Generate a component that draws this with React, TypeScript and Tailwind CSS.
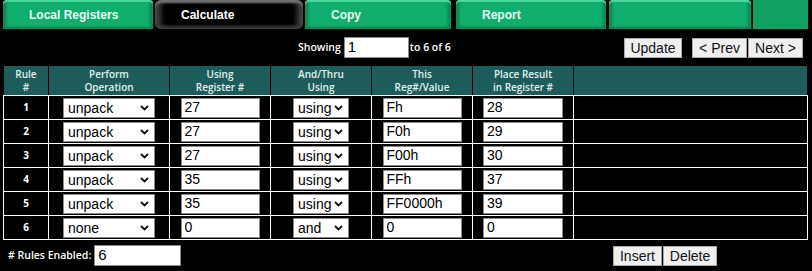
interface Rule {
  n: number;
  op: string;
  reg: string;
  mode: string;
  value: string;
  dest: string;
}

const rules: Rule[] = [
  { n: 1, op: 'unpack', reg: '27', mode: 'using', value: 'Fh', dest: '28' },
  { n: 2, op: 'unpack', reg: '27', mode: 'using', value: 'F0h', dest: '29' },
  { n: 3, op: 'unpack', reg: '27', mode: 'using', value: 'F00h', dest: '30' },
  { n: 4, op: 'unpack', reg: '35', mode: 'using', value: 'FFh', dest: '37' },
  { n: 5, op: 'unpack', reg: '35', mode: 'using', value: 'FF0000h', dest: '39' },
  { n: 6, op: 'none', reg: '0', mode: 'and', value: '0', dest: '0' }
];

const cols = 'grid grid-cols-[44px_120px_100px_100px_100px_100px_1fr]';
const label = "font-['Open_Sans',sans-serif]";
const field = "font-['Liberation_Sans',Arial,sans-serif] text-[14px] font-normal text-black";

function Tab({ text, active, width }: { text?: string; active?: boolean; width: string }) {
  if (active) {
    return (
      <div
        className={`${width} flex h-[29px] items-center rounded-md bg-black pl-[26px] shadow-[inset_0_3px_2px_#6e6e6e,inset_6px_0_5px_#3e3e3e,inset_-6px_0_5px_#3e3e3e,inset_0_-3px_3px_#333] font-['Liberation_Sans',Arial,sans-serif] text-[12px] font-bold text-white`}
      >
        {text}
      </div>
    );
  }
  return (
    <div
      className={`${width} flex h-[29px] items-center rounded-t-[4px] bg-[#0fae6c] pl-[26px] shadow-[inset_0_2px_1px_#48dc9e,inset_0_-2px_2px_#0a8853,inset_3px_0_3px_#08834f,inset_-3px_0_3px_#08834f] font-['Liberation_Sans',Arial,sans-serif] text-[12px] font-bold text-[#e9fff4]`}
    >
      {text}
    </div>
  );
}

// drop-down drawn as a box so the text sits where the browser control puts it
function Select({ value, width }: { value: string; width: string }) {
  return (
    <div
      className={`${field} ${width} flex h-[20px] items-center justify-between border border-[#8a8a8a] bg-white pl-[4px] pr-[5px] leading-none`}
    >
      <span>{value}</span>
      <svg width="9" height="6" viewBox="0 0 9 6" className="shrink-0">
        <polyline points="1,1 4.5,4.5 8,1" fill="none" stroke="#111" strokeWidth="1.8" />
      </svg>
    </div>
  );
}

function Field({ value, width }: { value: string; width: string }) {
  return (
    <input
      defaultValue={value}
      className={`${field} ${width} h-[20px] border border-[#8a8a8a] bg-white px-[3px] outline-none`}
    />
  );
}

function Btn({ children, width }: { children: string; width: string }) {
  return (
    <button
      className={`${width} h-[20px] border border-[#a8a8a8] bg-[#efefef] text-center font-['Liberation_Sans',Arial,sans-serif] text-[14px] font-normal leading-[18px] text-[#111]`}
    >
      {children}
    </button>
  );
}

export default function App() {
  return (
    <div className="h-[271px] w-[812px] overflow-hidden bg-black">
      {/* tab strip */}
      <div className="flex pl-[3px]">
        <Tab text="Local Registers" width="w-[150px]" />
        <div className="w-[2px]" />
        <Tab text="Calculate" active width="w-[148px]" />
        <div className="w-[2px]" />
        <Tab text="Copy" width="w-[146px]" />
        <div className="w-[5px]" />
        <Tab text="Report" width="w-[150px]" />
        <div className="w-[3px]" />
        <Tab width="w-[142px]" />
        <div className="w-[2px]" />
        <div className="h-[29px] w-[55px] bg-[#11a064]" />
      </div>

      {/* paging */}
      <div className={`${label} mt-[8px] flex h-[21px] items-center pl-[298px] pr-[9px] text-[10.5px] font-semibold text-white`}>
        <span>Showing</span>
        <input
          defaultValue="1"
          className={`${field} ml-[3px] h-[21px] w-[65px] border border-[#8a8a8a] bg-white px-[3px] text-[15px] outline-none`}
        />
        <span className="ml-[1px]">to 6 of 6</span>
        <div className="ml-auto flex">
          <Btn width="w-[58px]">Update</Btn>
          <div className="w-[10px]" />
          <Btn width="w-[55px]">&lt; Prev</Btn>
          <div className="w-[1px]" />
          <Btn width="w-[55px]">Next &gt;</Btn>
        </div>
      </div>

      {/* rules table */}
      <div className="ml-[3px] mt-[8px] w-[805px]">
        <div className={`${cols} ${label} h-[29px] gap-x-px bg-black px-px text-center text-[10px] leading-[12.5px] font-semibold text-[#e4eeee]`}>
          <div className="flex flex-col justify-center bg-[#1c5d5c]">
            <span>Rule</span>
            <span>#</span>
          </div>
          <div className="flex flex-col justify-center bg-[#1c5d5c]">
            <span>Perform</span>
            <span>Operation</span>
          </div>
          <div className="flex flex-col justify-center bg-[#1c5d5c]">
            <span>Using</span>
            <span>Register #</span>
          </div>
          <div className="flex flex-col justify-center bg-[#1c5d5c]">
            <span>And/Thru</span>
            <span>Using</span>
          </div>
          <div className="flex flex-col justify-center bg-[#1c5d5c]">
            <span>This</span>
            <span>Reg#/Value</span>
          </div>
          <div className="flex flex-col justify-center bg-[#1c5d5c]">
            <span>Place Result</span>
            <span>in Register #</span>
          </div>
          <div className="bg-[#1c5d5c]" />
        </div>

        <div className={`${cols} auto-rows-[23px] gap-px border border-white bg-white`}>
          {rules.map((r) => (
            <div key={r.n} className="contents">
              <div className={`${label} flex items-center justify-center bg-black text-[10px] font-bold text-white`}>
                {r.n}
              </div>
              <div className="flex items-center justify-center bg-black">
                <Select value={r.op} width="w-[92px]" />
              </div>
              <div className="flex items-center justify-center bg-black">
                <Field value={r.reg} width="w-[79px]" />
              </div>
              <div className="flex items-center justify-center bg-black">
                <Select value={r.mode} width="w-[56px]" />
              </div>
              <div className="flex items-center justify-center bg-black">
                <Field value={r.value} width="w-[79px]" />
              </div>
              <div className="flex items-center justify-center bg-black">
                <Field value={r.dest} width="w-[80px]" />
              </div>
              <div className="bg-black" />
            </div>
          ))}
        </div>
      </div>

      {/* footer */}
      <div className={`${label} mt-[5px] flex h-[21px] items-center pl-[8px] pr-[95px] text-[10.5px] font-semibold text-white`}>
        <span># Rules Enabled:</span>
        <input
          defaultValue="6"
          className={`${field} ml-[3px] h-[21px] w-[87px] border border-[#8a8a8a] bg-white px-[3px] text-[15px] outline-none`}
        />
        <div className="ml-auto flex">
          <Btn width="w-[49px]">Insert</Btn>
          <div className="w-[1px]" />
          <Btn width="w-[54px]">Delete</Btn>
        </div>
      </div>
    </div>
  );
}
